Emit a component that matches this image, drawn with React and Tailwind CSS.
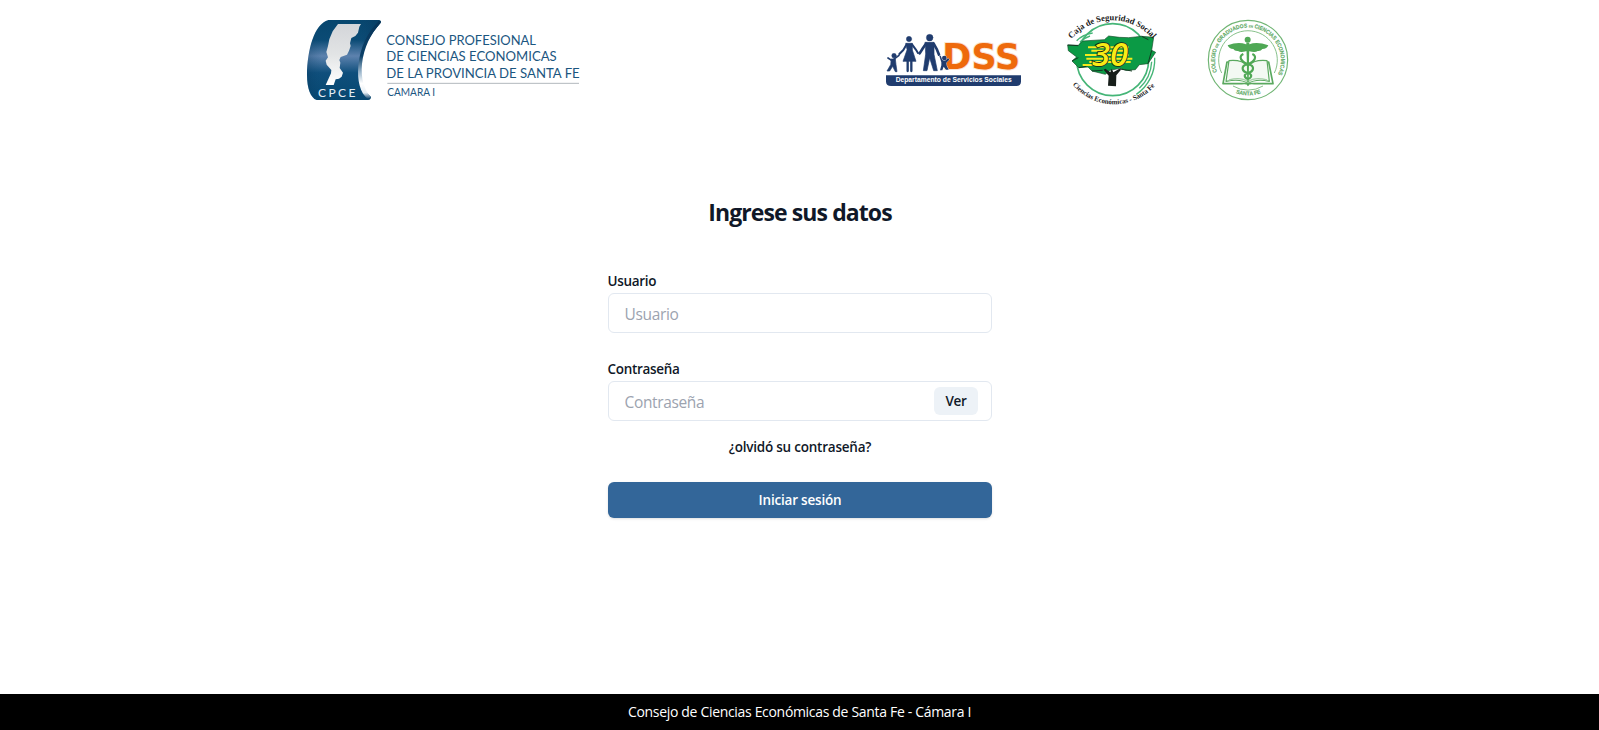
function CpceLogo() {
  return (
    <svg className="h-[84px] w-[276px] shrink-0 overflow-visible" viewBox="18 24 828 252" role="img" aria-label="CPCE">
      <defs>
        <linearGradient id="cpceBlue" x1="0" y1="0" x2="0" y2="1">
          <stop offset="0" stopColor="#07466e" />
          <stop offset="0.25" stopColor="#0b4b75" />
          <stop offset="0.45" stopColor="#5d82ae" />
          <stop offset="0.66" stopColor="#0f4f7c" />
          <stop offset="1" stopColor="#064770" />
        </linearGradient>
        <linearGradient id="cpceSheen" x1="0" y1="0" x2="1" y2="0">
          <stop offset="0" stopColor="#04365c" stopOpacity="0.3" />
          <stop offset="0.2" stopColor="#0d4a75" stopOpacity="0" />
          <stop offset="0.7" stopColor="#0d4a75" stopOpacity="0" />
          <stop offset="0.9" stopColor="#073a60" stopOpacity="0.45" />
        </linearGradient>
        <linearGradient id="cpceFold" x1="0" y1="0" x2="0" y2="1">
          <stop offset="0" stopColor="#073458" />
          <stop offset="0.45" stopColor="#0b4068" />
          <stop offset="0.66" stopColor="#9fb9ce" />
          <stop offset="0.8" stopColor="#ffffff" />
          <stop offset="0.92" stopColor="#e8eff5" />
          <stop offset="1" stopColor="#0b4068" />
        </linearGradient>
        <linearGradient id="cpceMap" x1="0" y1="0" x2="0" y2="1">
          <stop offset="0" stopColor="#d3d5d9" />
          <stop offset="0.5" stopColor="#e2e4e5" />
          <stop offset="1" stopColor="#ffffff" />
        </linearGradient>
      </defs>
      <path d="M85 30H237Q246 32 241 40C212 72 188 112 180 160C173 205 186 240 213 261Q212 270 204 270H50C32 264 21 235 21 195C22 120 42 42 85 30Z" fill="url(#cpceBlue)" />
      <path d="M85 30H237Q246 32 241 40C212 72 188 112 180 160C173 205 186 240 213 261Q212 270 204 270H50C32 264 21 235 21 195C22 120 42 42 85 30Z" fill="url(#cpceSheen)" />
      <path d="M237 32Q246 32 241 40C212 72 192 112 186 162C182 205 192 240 213 261L204 267C180 250 171 210 175 168C180 112 201 68 237 32Z" fill="url(#cpceFold)" />
      <path d="M114 42H183L178 50L174 68L166 78L154 84L150 100L152 108L147 122L141 134L122 141L118 150L121 158L119 174L129 188L125 200L117 206L107 208L101 225H77L93 190L94 180L80 164L77 152L84 142L79 126L84 108L88 88L98 64Z" fill="url(#cpceMap)" />
      <g fontFamily="Lato, sans-serif">
        <text x="54" y="261" fontSize="36" fill="#e6eef5" textLength="112" lengthAdjust="spacing">CPCE</text>
        <g fill="#1b567f" fontSize="38.5">
          <text x="259" y="105" textLength="449" lengthAdjust="spacingAndGlyphs">CONSEJO PROFESIONAL</text>
          <text x="259" y="154" textLength="511" lengthAdjust="spacingAndGlyphs">DE CIENCIAS ECONOMICAS</text>
          <text x="259" y="204" textLength="580" lengthAdjust="spacingAndGlyphs">DE LA PROVINCIA DE SANTA FE</text>
          <text x="262" y="257" fontSize="32" textLength="143" lengthAdjust="spacingAndGlyphs">CAMARA I</text>
        </g>
      </g>
      <path d="M262 220H837" stroke="#b3b9bd" strokeWidth="3" />
    </svg>
  );
}

function DssLogo() {
  return (
    <svg className="h-[56px] w-[138px] shrink-0 overflow-visible" viewBox="15 20 414 168" role="img" aria-label="DSS">
      <text x="187" y="131" fontFamily="'DejaVu Sans', sans-serif" fontWeight="700" fontSize="107" fill="#ee6a0c" stroke="#fbe3d0" strokeWidth="6" paintOrder="stroke" textLength="234" lengthAdjust="spacingAndGlyphs">DSS</text>
      <g fill="#203c6e" stroke="#203c6e" strokeLinecap="round" strokeLinejoin="round">
        <circle cx="42" cy="91" r="7" />
        <path d="M34 101H46L48 118L51 139H46L38 123L29 137H21L32 118Z" strokeWidth="2" />
        <path d="M24 98L36 106L57 90" fill="none" strokeWidth="5" />
        <circle cx="87" cy="41" r="8" />
        <path d="M78 54H97L97 74L108 108H69L81 74Z" strokeWidth="2" />
        <path d="M80 57L70 74L58 86M96 57L107 72L114 83" fill="none" strokeWidth="6" />
        <path d="M83 108V137M94 108V137" fill="none" strokeWidth="7" />
        <circle cx="149" cy="37" r="10" />
        <path d="M136 51H162L162 87L172 136H161L149 98L141 136H130L137 87Z" strokeWidth="2" />
        <path d="M138 55L129 68L119 84M161 55L171 73L177 88" fill="none" strokeWidth="8" />
      </g>
      <g fill="#203c6e" stroke="#ffffff" strokeWidth="2" paintOrder="stroke">
        <path d="M178 92L182 91L188 104L194 105L205 99L208 103L199 112L200 121L206 133H198L191 124L187 135H180L184 120L184 111Z" />
        <circle cx="193" cy="98" r="7" />
      </g>
      <path d="M18 150H423V169Q422 182 409 182H33Q19 182 18 169Z" fill="#203c6e" />
      <text x="47" y="171" fontFamily="'Liberation Sans', sans-serif" fontWeight="700" fontSize="19.5" fill="#ffffff" textLength="348" lengthAdjust="spacingAndGlyphs">Departamento de Servicios Sociales</text>
    </svg>
  );
}

function CajaLogo() {
  return (
    <svg className="mr-[5px] h-[94px] w-[94px] shrink-0 overflow-visible" viewBox="15 14 282 282" role="img" aria-label="Caja de Seguridad Social">
      <defs>
        <path id="cajaTop" d="M35 92A160 160 0 0 1 281 95" />
        <path id="cajaBottom" d="M38 229A162 162 0 0 0 286 231" />
      </defs>
      <g fill="none" stroke="#45b577">
        <circle cx="158" cy="154" r="108" strokeWidth="5" />
        <path d="M284 148A126 126 0 0 1 229 258M50 97Q68 79 98 74M275 160A119 119 0 0 1 238 240M60 101Q72 89 90 83" strokeWidth="4" />
      </g>
      <path d="M23 110L55 111L68 98L133 94L146 83L178 87L206 88L245 84L281 87L275 126L287 132L264 166L238 169L226 184L198 186L180 180L150 186L136 198L96 188L84 176L56 178L36 158L50 146L25 127Z" fill="#0b9a45" stroke="#174d2b" strokeWidth="2" strokeLinejoin="round" />
      <path d="M23 110L55 112M36 158L55 148M56 178L79 174M245 84L265 94M264 166L275 126M96 188L128 186M180 182L216 188" stroke="#123b22" strokeWidth="3" fill="none" />
      <path d="M84 117H206M94 127H190M75 140H206M79 151H217M88 161H212M68 170H118" stroke="#f5ea1c" strokeWidth="6" />
      <path d="M131 184L136 181L151 192L155 181L160 192L178 181L183 184L169 201L168 234L144 232L146 202Z" fill="#171e1a" />
      <text x="96" y="174" fontFamily="'Open Sans', sans-serif" fontStyle="italic" fontWeight="600" fontSize="100" fill="#f8ec16" stroke="#142018" strokeWidth="5" paintOrder="stroke" textLength="108" lengthAdjust="spacingAndGlyphs">30</text>
      <g fontFamily="'Liberation Serif', serif" fontWeight="700" fill="#202020">
        <text fontSize="26"><textPath href="#cajaTop" textLength="276" lengthAdjust="spacingAndGlyphs">Caja de Seguridad Social</textPath></text>
        <text fontSize="21"><textPath href="#cajaBottom" textLength="280" lengthAdjust="spacingAndGlyphs">Ciencias Económicas - Santa Fe</textPath></text>
      </g>
    </svg>
  );
}

function ColegioLogo() {
  return (
    <svg className="h-[84px] w-[84px] shrink-0 overflow-visible" viewBox="19 16 252 252" role="img" aria-label="Colegio de Graduados en Ciencias Económicas">
      <defs>
        <path id="colTop" d="M52 178A99 99 0 1 1 236 182" />
        <path id="colBottom" d="M100 238A106 106 0 0 0 191 238" />
      </defs>
      <g fill="none" stroke="#70b574">
        <circle cx="145" cy="142" r="119" strokeWidth="3.5" />
        <path d="M66 181A88 88 0 1 1 224 181" strokeWidth="2.5" />
        <path d="M100 220A88 88 0 0 0 190 220" strokeWidth="2.5" />
      </g>
      <g fontFamily="'Liberation Sans', sans-serif" fontWeight="700" fill="#60a965" stroke="#60a965" strokeWidth="0.4">
        <text fontSize="17"><textPath href="#colTop" textLength="389" lengthAdjust="spacingAndGlyphs">COLEGIO <tspan fontSize="10">DE</tspan> GRADUADOS <tspan fontSize="10">EN</tspan> CIENCIAS ECONOMICAS</textPath></text>
        <text fontSize="17"><textPath href="#colBottom" startOffset="9" textLength="77" lengthAdjust="spacingAndGlyphs">SANTA FE</textPath></text>
      </g>
      <g fill="none" stroke="#5aa95f" strokeLinejoin="round">
        <path d="M90 148H82L70 213H126Q145 211 145 218Q145 211 164 213H220L207 148H198" strokeWidth="5" />
        <path d="M88 144Q125 140 145 160Q163 140 202 144L209 206Q168 197 145 213Q124 197 79 206Z" fill="#f3f9f3" strokeWidth="3.5" />
        <path d="M88 202Q125 192 144 207M202 202Q165 192 146 207" stroke="#a5cfa8" strokeWidth="4" />
      </g>
      <g fill="#4fa855">
        <circle cx="144" cy="81" r="9" />
        <path d="M139 95Q116 86 84 98Q88 109 101 109Q105 116 115 115Q122 121 139 116H149Q167 121 174 115Q184 116 188 109Q202 109 206 98Q172 86 149 95Z" />
        <path d="M140 90H149L147 210H143Z" />
      </g>
      <path d="M131 124C114 132 126 149 145 154C168 160 162 177 145 181C130 185 134 195 145 199M158 124C175 132 163 149 144 154C121 160 127 177 144 181C160 185 156 195 145 199" fill="none" stroke="#4fa855" strokeWidth="6.5" />
    </svg>
  );
}

export default function App() {
  return (
    <div className="flex h-[730px] flex-col bg-white font-['Open_Sans','Noto_Sans',sans-serif] text-gray-900">
      <header className="flex h-[120px] shrink-0 items-center justify-between pl-[306px] pr-[309px]">
        <CpceLogo />
        <div className="flex items-center gap-[42px]">
          <DssLogo />
          <CajaLogo />
          <ColegioLogo />
        </div>
      </header>

      <main className="flex flex-1 flex-col items-center">
        <h1 className="mt-[76px] pl-px text-[23px] leading-8 font-bold tracking-[-0.9px] whitespace-nowrap">Ingrese sus datos</h1>
        <form className="mt-[43px] flex w-96 flex-col" onSubmit={(e) => e.preventDefault()}>
          <label htmlFor="usuario" className="h-[22px] text-[13.5px] leading-5 font-semibold tracking-[-0.3px]">Usuario</label>
          <input id="usuario" placeholder="Usuario" className="h-10 w-full rounded-md border border-[#e2e8f0] px-4 pt-px text-[15.5px] tracking-[-0.35px] outline-none placeholder:text-[#9ca3af]" />
          <label htmlFor="clave" className="mt-[26px] h-[22px] text-[13.5px] leading-5 font-semibold tracking-[-0.3px]">Contraseña</label>
          <div className="flex h-10 items-center rounded-md border border-[#e2e8f0] pr-[13px] pl-4">
            <input id="clave" type="password" placeholder="Contraseña" className="min-w-0 flex-1 pt-[3px] text-[15.5px] tracking-[-0.35px] outline-none placeholder:text-[#9ca3af]" />
            <button type="button" className="h-7 w-11 rounded-md bg-[#edf2f7] pl-px text-[13.5px] font-semibold tracking-[-0.4px]">Ver</button>
          </div>
          <a href="#" className="mt-4 self-center pl-px text-[13.5px] leading-5 font-semibold tracking-[-0.22px]">¿olvidó su contraseña?</a>
          <button type="submit" className="mt-[25px] h-9 rounded-md bg-[#336699] pl-px text-[13.5px] font-semibold tracking-[-0.2px] text-white shadow-sm">Iniciar sesión</button>
        </form>
      </main>

      <footer className="flex h-9 shrink-0 items-center justify-center bg-black text-sm tracking-[-0.32px] text-white">
        Consejo de Ciencias Económicas de Santa Fe - Cámara I
      </footer>
    </div>
  );
}
